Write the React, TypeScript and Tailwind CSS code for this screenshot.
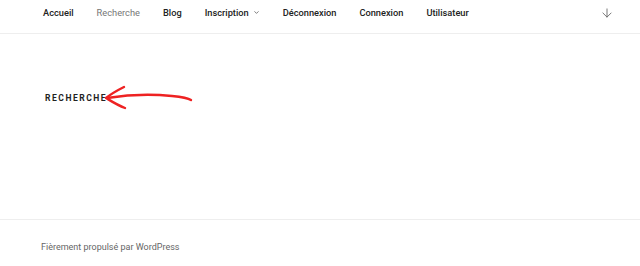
import { ChevronDown, ArrowDown } from 'lucide-react'

const items = ['Accueil', 'Recherche', 'Blog', 'Inscription', 'Déconnexion', 'Connexion', 'Utilisateur']

const App = () => {
  return (
    <div className="flex h-[266px] w-[640px] flex-col bg-white font-['Roboto',sans-serif] text-[#222]">
      <nav className="flex h-[34px] items-start border-b border-[#eee] pl-[43px] pr-[26px] pt-[6px]">
        <ul className="flex flex-1 items-center gap-[23px] text-[9.25px] font-medium leading-[13px]">
          {items.map((item) => (
            <li
              key={item}
              className={`flex items-center gap-[4px] ${item === 'Recherche' ? 'font-normal text-[#767676]' : ''}`}
            >
              {item}
              {item === 'Inscription' && <ChevronDown className="h-[7px] w-[7px]" strokeWidth={2} />}
            </li>
          ))}
        </ul>
        <ArrowDown className="h-[14px] w-[14px] text-[#666]" strokeWidth={1.5} />
      </nav>

      <main className="flex flex-1 flex-col pl-[45px] pt-[49px]">
        <div className="flex items-center">
          <h1 className="text-[8.5px] font-bold uppercase tracking-[0.18em] text-[#222]">Recherche</h1>
          <svg width="90" height="30" viewBox="0 0 90 30" className="-ml-[3px]">
            <path
              d="M20 4 C14 7 7 11 2 15 C7 18 13 22 21 25"
              fill="none"
              stroke="#ee2222"
              strokeWidth="2.4"
              strokeLinecap="round"
              strokeLinejoin="round"
            />
            <path
              d="M3 15 C22 12 48 11 68 13 C78 14 84 15 87 17"
              fill="none"
              stroke="#ee2222"
              strokeWidth="2.4"
              strokeLinecap="round"
            />
          </svg>
        </div>
      </main>

      <footer className="flex h-[47px] items-center border-t border-[#eee] pl-[41px] pt-[10px]">
        <span className="text-[9px] text-[#666]">Fièrement propulsé par WordPress</span>
      </footer>
    </div>
  )
}

export default App
